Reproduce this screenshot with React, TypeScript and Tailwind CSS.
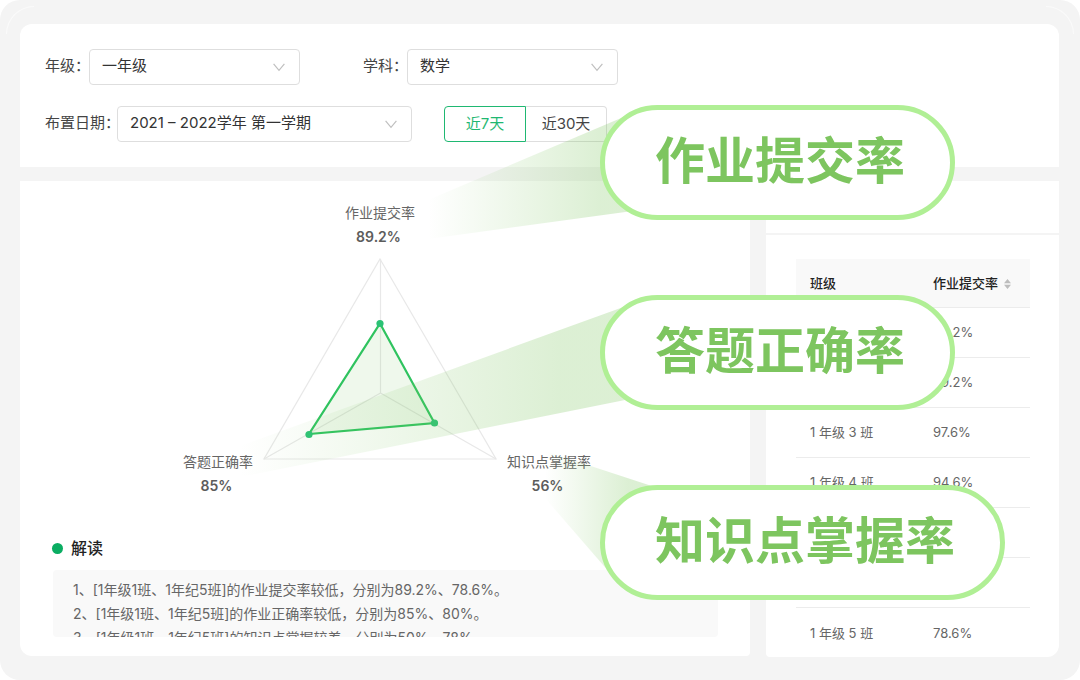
import type { ReactNode } from "react";

const classRows = [
  { name: "1 年级 1 班", rate: "89.2%" },
  { name: "1 年级 2 班", rate: "89.2%" },
  { name: "1 年级 3 班", rate: "97.6%" },
  { name: "1 年级 4 班", rate: "94.6%" },
  { name: "", rate: "" },
  { name: "", rate: "" },
  { name: "1 年级 5 班", rate: "78.6%" },
];

const notes = [
  "1、[1年级1班、1年纪5班]的作业提交率较低，分别为89.2%、78.6%。",
  "2、[1年级1班、1年纪5班]的作业正确率较低，分别为85%、80%。",
  "3、[1年级1班、1年纪5班]的知识点掌握较差，分别为50%、78%。",
];

function Field({
  id,
  label,
  value,
  labelClass,
  selectClass,
}: {
  id: string;
  label: string;
  value: string;
  labelClass: string;
  selectClass: string;
}) {
  return (
    <div className="flex items-center">
      <label htmlFor={id} className={`${labelClass} shrink-0 pb-[2px] whitespace-nowrap text-[#444]`}>
        {label}
      </label>
      <div className={`${selectClass} relative`}>
        <select
          id={id}
          className="h-9 w-full appearance-none rounded border border-[#dedede] bg-white pr-8 pb-[2px] pl-3 text-[#333] outline-none"
        >
          <option>{value}</option>
        </select>
        <svg
          className="pointer-events-none absolute top-[14px] right-[15px] h-[9px] w-3"
          viewBox="0 0 12 9"
          fill="none"
          stroke="#bfbfbf"
          strokeWidth="1.2"
          aria-hidden="true"
        >
          <path d="M0.6 0.8 L6 7.4 L11.4 0.8" />
        </svg>
      </div>
    </div>
  );
}

function Metric({ name, value }: { name: string; value: string }) {
  return (
    <div className="text-center text-sm leading-6 whitespace-nowrap text-[#666]">
      <div>{name}</div>
      <div className="pr-[3px] font-semibold text-[#5c5c5c]">{value}</div>
    </div>
  );
}

function RadarChart() {
  return (
    <svg className="h-[204px] w-[236px]" viewBox="262 257 236 204" fill="none" aria-hidden="true">
      <g stroke="#e8e8e8" strokeWidth="1.2">
        <path d="M380 259 L496 459 L264 459 Z" />
        <path d="M380.5 259 V393 M380.5 393 L496 459 M380.5 393 L264 459" />
      </g>
      <path
        d="M380 323.5 L434.5 423 L309 434 Z"
        fill="#7dc55f"
        fillOpacity="0.12"
        stroke="#2fc35f"
        strokeWidth="2.2"
      />
      <g fill="#2bc275">
        <circle cx="380" cy="323.5" r="3.6" />
        <circle cx="434.5" cy="423" r="3.6" />
        <circle cx="309" cy="434.5" r="3.6" />
      </g>
    </svg>
  );
}

function Beams() {
  return (
    <svg
      className="pointer-events-none absolute top-0 left-0 h-[680px] w-[1080px]"
      viewBox="0 0 1080 680"
      aria-hidden="true"
    >
      <defs>
        <linearGradient id="beam-a" gradientUnits="userSpaceOnUse" x1="428" y1="0" x2="600" y2="0">
          <stop offset="0" stopColor="#7dc55f" stopOpacity="0" />
          <stop offset="1" stopColor="#7dc55f" stopOpacity="0.27" />
        </linearGradient>
        <linearGradient id="beam-b" gradientUnits="userSpaceOnUse" x1="240" y1="0" x2="560" y2="0">
          <stop offset="0" stopColor="#7dc55f" stopOpacity="0" />
          <stop offset="1" stopColor="#7dc55f" stopOpacity="0.27" />
        </linearGradient>
        <linearGradient id="beam-c" gradientUnits="userSpaceOnUse" x1="545" y1="0" x2="628" y2="0">
          <stop offset="0" stopColor="#7dc55f" stopOpacity="0" />
          <stop offset="1" stopColor="#7dc55f" stopOpacity="0.27" />
        </linearGradient>
      </defs>
      <path d="M428 200 L640 110 L640 210 L428 239 Z" fill="url(#beam-a)" />
      <path d="M240 446 L640 301 L640 397 L240 477 Z" fill="url(#beam-b)" />
      <path d="M545 451 L670 492 L670 560 L610 573 L545 498 Z" fill="url(#beam-c)" />
    </svg>
  );
}

function Callout({ place, children }: { place: string; children: ReactNode }) {
  return (
    <div
      className={`${place} absolute left-[600px] flex h-[115px] items-center rounded-full border-5 border-[#b0ef95] bg-white pr-[45px] pb-[3px] pl-[50px] text-[50px] leading-none font-bold whitespace-nowrap text-[#7dc55f]`}
    >
      {children}
    </div>
  );
}

export default function App() {
  return (
    <div className="relative min-h-screen overflow-hidden rounded-[20px] bg-[#f4f4f4] pt-6 pr-[21px] pb-[22px] pl-5 font-['Inter','Noto_Sans_CJK_SC',sans-serif] text-[15px]">
      <span className="absolute top-[6px] left-[6px] size-7 rounded-tl-[28px] border-t border-l border-white/60" />
      <span className="absolute top-[6px] right-[6px] size-7 rounded-tr-[28px] border-t border-r border-white/60" />

      <section className="flex flex-col gap-[21px] rounded-t-xl bg-white px-[25px] py-[25px]">
        <div className="flex gap-[63px]">
          <Field id="grade" label="年级：" value="一年级" labelClass="w-11" selectClass="w-[211px]" />
          <Field id="subject" label="学科：" value="数学" labelClass="w-11" selectClass="w-[211px]" />
        </div>
        <div className="flex gap-8">
          <Field
            id="period"
            label="布置日期："
            value="2021 – 2022学年 第一学期"
            labelClass="w-[72px]"
            selectClass="w-[295px]"
          />
          <div className="flex">
            <button
              type="button"
              className="h-9 w-[82px] rounded-l border border-[#1fb872] bg-white text-[#1fb872]"
            >
              近7天
            </button>
            <button
              type="button"
              className="h-9 w-[81px] rounded-r border border-l-0 border-[#dedede] bg-white text-[#444]"
            >
              近30天
            </button>
          </div>
        </div>
      </section>

      <main className="mt-[14px] flex items-start gap-4">
        <section className="min-w-0 flex-1 rounded-br-sm rounded-bl-xl bg-white pt-5 pb-[19px]">
          <div className="pr-[10px]">
            <Metric name="作业提交率" value="89.2%" />
            <div className="mt-2 grid grid-cols-[1fr_auto_1fr] gap-x-[9px]">
              <div className="self-end justify-self-end">
                <Metric name="答题正确率" value="85%" />
              </div>
              <div className="pb-[37px]">
                <RadarChart />
              </div>
              <div className="self-end justify-self-start">
                <Metric name="知识点掌握率" value="56%" />
              </div>
            </div>
          </div>

          <h2 className="mt-[38px] flex items-center gap-2 pl-8 text-base leading-6 font-medium text-[#222]">
            <span className="size-[11px] rounded-full bg-[#0aad62]" />
            解读
          </h2>
          <div className="mt-[10px] mr-8 ml-[33px] h-[67px] overflow-hidden rounded-sm bg-[#f9f9f9] pt-2 pl-5 text-sm leading-6 whitespace-nowrap text-[#666]">
            {notes.map((note) => (
              <p key={note}>{note}</p>
            ))}
          </div>
        </section>

        <section className="w-[293px] shrink-0 rounded-br-xl rounded-bl-sm bg-white">
          <div className="h-[54px] border-b-2 border-[#f4f4f4]" />
          <table className="mt-6 ml-[30px] w-[234px] table-fixed border-collapse text-left text-[13px] text-[#666]">
            <thead>
              <tr className="h-12 border-b border-[#ececec] bg-[#f9f9f9] text-[#222]">
                <th className="w-[123px] pt-[2px] pl-[14px] font-medium">班级</th>
                <th className="pt-[2px] pl-[14px] font-medium">
                  <span className="flex items-center gap-[6px] whitespace-nowrap">
                    作业提交率
                    <svg className="h-[10px] w-[7px]" viewBox="0 0 7 10" fill="#bdbdbd" aria-hidden="true">
                      <path d="M3.5 0 L7 4.2 H0 Z M0 5.8 H7 L3.5 10 Z" />
                    </svg>
                  </span>
                </th>
              </tr>
            </thead>
            <tbody>
              {classRows.map((row, index) => (
                <tr key={index} className="h-[50px] border-b border-[#ececec] last:border-0">
                  <td className="pt-[2px] pl-[14px]">{row.name}</td>
                  <td className="pt-[2px] pl-[14px]">{row.rate}</td>
                </tr>
              ))}
            </tbody>
          </table>
        </section>
      </main>

      <Beams />
      <Callout place="top-[105px]">作业提交率</Callout>
      <Callout place="top-[295px]">答题正确率</Callout>
      <Callout place="top-[485px]">知识点掌握率</Callout>
    </div>
  );
}
